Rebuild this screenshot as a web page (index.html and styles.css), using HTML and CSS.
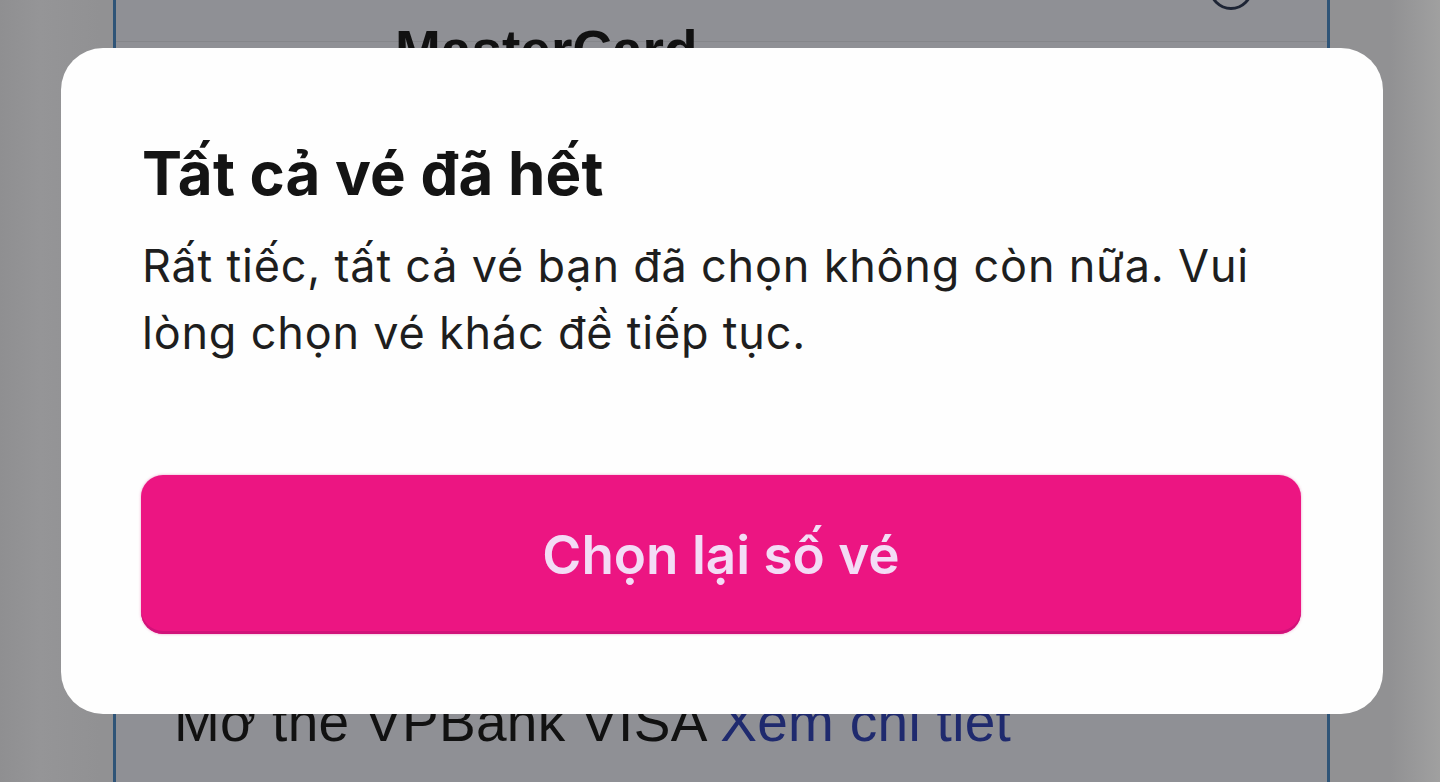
FILE: index.html
```html
<!DOCTYPE html>
<html lang="vi">
<head>
<meta charset="utf-8">
<title>Tất cả vé đã hết</title>
<link rel="stylesheet" href="styles.css">
</head>
<body>
<div class="page">
  <div class="card">
    <div class="card-top">
      <span class="brand">MasterCard</span>
      <span class="radio"></span>
    </div>
    <div class="card-bottom">
      <span class="promo">Mở thẻ VPBank VISA <span class="link">Xem chi tiết</span></span>
    </div>
  </div>
</div>
<div class="overlay">
  <div class="dialog">
    <h1 class="title">Tất cả vé đã hết</h1>
    <p class="message">Rất tiếc, tất cả vé bạn đã chọn không còn nữa. Vui lòng chọn vé khác đề tiếp tục.</p>
    <button class="btn">Chọn lại số vé</button>
  </div>
</div>
</body>
</html>
```
FILE: styles.css
```css
* { box-sizing: border-box; }
html, body {
  margin: 0;
  padding: 0;
  width: 1440px;
  height: 782px;
  overflow: hidden;
}
body {
  background: linear-gradient(to right, #8f8f91 0, #959597 40px, #919193 100px, #919193 1390px, #a0a0a0 1440px);
  font-family: Inter, "Noto Sans", "Liberation Sans", sans-serif;
  position: relative;
}
.page {
  height: 782px;
  padding: 0 110px 0 113px;
}
.card {
  height: 782px;
  border-left: 3px solid #2f5477;
  border-right: 3px solid #2f5477;
  background: #8f9095;
  display: flex;
  flex-direction: column;
  justify-content: space-between;
}
.card-top {
  height: 42px;
  border-bottom: 1px solid #85868a;
  position: relative;
}
.brand {
  position: absolute;
  left: 279px;
  top: 18px;
  font-family: "Liberation Sans", Arial, sans-serif;
  font-weight: 700;
  font-size: 55px;
  line-height: normal;
  color: #111;
}
.radio {
  position: absolute;
  left: 1093px;
  top: -34px;
  width: 44px;
  height: 44px;
  border: 3px solid #1e2535;
  border-radius: 50%;
}
.card-bottom {
  height: 68px;
  position: relative;
}
.promo {
  position: absolute;
  left: 58px;
  top: -24px;
  font-family: "Liberation Sans", Arial, sans-serif;
  font-size: 55px;
  letter-spacing: 0.3px;
  line-height: normal;
  color: #111;
  white-space: nowrap;
}
.link { color: #1f2a6e; }
.overlay {
  position: absolute;
  left: 0;
  top: 0;
  width: 1440px;
  height: 782px;
}
.dialog {
  position: absolute;
  left: 61px;
  top: 48px;
  width: 1322px;
  height: 666px;
  background: #fefefe;
  border-radius: 42px;
  padding: 88px 82px 80px 80px;
  display: flex;
  flex-direction: column;
}
.title {
  margin: 0 0 0 1px;
  font-size: 60px;
  font-weight: 700;
  line-height: 74px;
  color: #141414;
  letter-spacing: 0.2px;
}
.message {
  margin: 22px 0 0 1px;
  font-size: 45px;
  line-height: 67px;
  letter-spacing: 0.8px;
  color: #1e1e1e;
  font-weight: 400;
}
.btn {
  margin-top: auto;
  height: 159px;
  width: 100%;
  border: none;
  border-radius: 22px;
  background: #ec1582;
  box-shadow: inset 0 -3px 0 #d1127a, 0 0 3px rgba(210, 20, 120, 0.4);
  color: #f3dcf5;
  font-family: Inter, "Noto Sans", "Liberation Sans", sans-serif;
  font-size: 53px;
  font-weight: 600;
  cursor: pointer;
}
```
